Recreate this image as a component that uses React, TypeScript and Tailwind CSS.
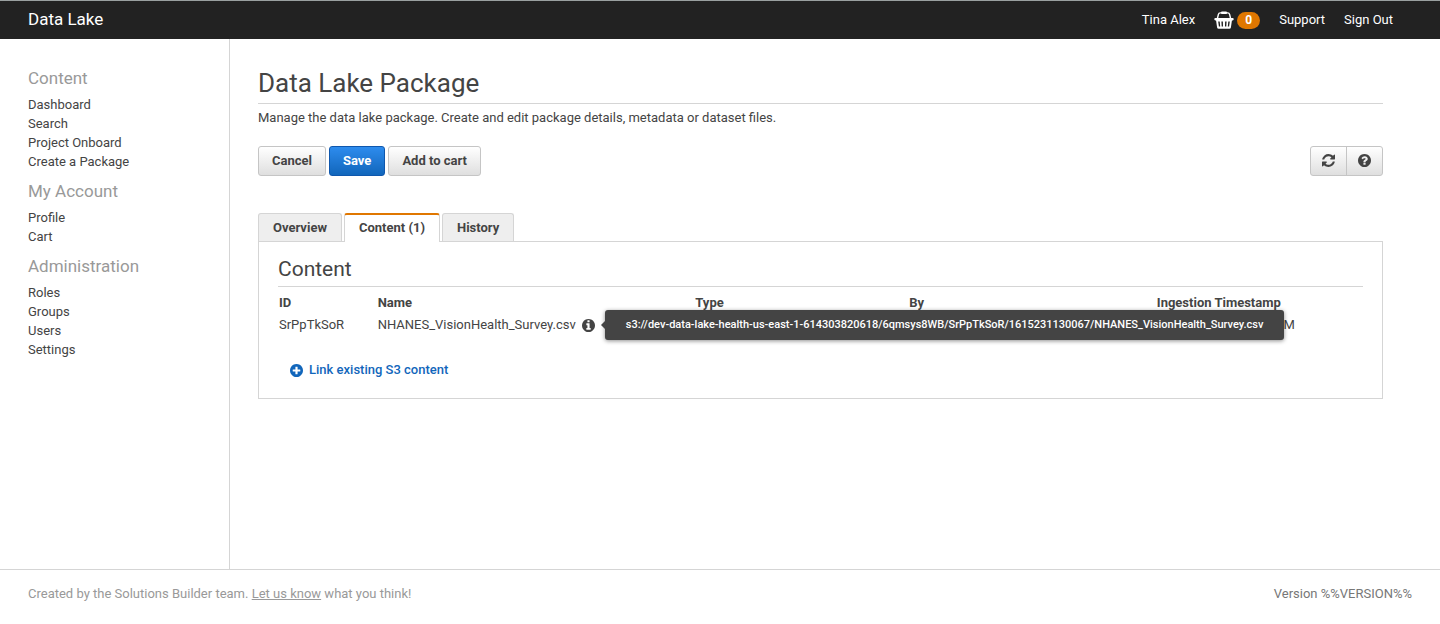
import { useState, type ReactNode } from "react";

const navigation = [
  { title: "Content", links: ["Dashboard", "Search", "Project Onboard", "Create a Package"] },
  { title: "My Account", links: ["Profile", "Cart"] },
  { title: "Administration", links: ["Roles", "Groups", "Users", "Settings"] },
];

const tabs = ["Overview", "Content (1)", "History"];

const files = [
  {
    id: "SrPpTkSoR",
    name: "NHANES_VisionHealth_Survey.csv",
    location:
      "s3://dev-data-lake-health-us-east-1-614303820618/6qmsys8WB/SrPpTkSoR/1615231130067/NHANES_VisionHealth_Survey.csv",
    type: "",
    by: "",
    timestamp: "03/08/2021 7:18:50 PM",
  },
];

const disc =
  "M1664 896q0 209-103 385.5t-279.5 279.5-385.5 103-385.5-103-279.5-279.5-103-385.5 103-385.5 279.5-279.5 385.5-103 385.5 103 279.5 279.5 103 385.5z";

const iconPaths = {
  info:
    "M1152 1376v-160q0-14-9-23t-23-9h-96v-512q0-14-9-23t-23-9h-320q-14 0-23 9t-9 23v160q0 14 9 23t23 9h96v320h-96q-14 0-23 9t-9 23v160q0 14 9 23t23 9h448q14 0 23-9t9-23zM1024 480v-160q0-14-9-23t-23-9h-192q-14 0-23 9t-9 23v160q0 14 9 23t23 9h192q14 0 23-9t9-23z" +
    disc,
  help:
    "M1024 1376v-192q0-14-9-23t-23-9h-192q-14 0-23 9t-9 23v192q0 14 9 23t23 9h192q14 0 23-9t9-23zM1280 704q0-88-55.5-163t-138.5-116-170-41q-243 0-371 213-15 24 8 42l132 100q7 6 19 6 16 0 25-12 53-68 86-92 34-24 86-24 48 0 85.5 26t37.5 59q0 38-20 61t-68 45q-63 28-115.5 86.5t-52.5 125.5v36q0 14 9 23t23 9h192q14 0 23-9t9-23q0-19 21.5-49.5t54.5-49.5q32-18 49-28.5t46-35 44.5-48 28-60.5 12.5-81z" +
    disc,
  plus:
    "M1344 960v-128q0-26-19-45t-45-19h-256v-256q0-26-19-45t-45-19h-128q-26 0-45 19t-19 45v256h-256q-26 0-45 19t-19 45v128q0 26 19 45t45 19h256v256q0 26 19 45t45 19h128q26 0 45-19t19-45v-256h256q26 0 45-19t19-45z" +
    disc,
  refresh:
    "M1639 1056q0 5-1 7-64 268-268 434.5t-478 166.5q-146 0-282.5-55t-243.5-157l-129 129q-19 19-45 19t-45-19-19-45v-448q0-26 19-45t45-19h448q26 0 45 19t19 45-19 45l-137 137q71 66 161 102t187 36q134 0 250-65t186-179q11-17 53-117 8-23 30-23h192q13 0 22.5 9.5t9.5 22.5zM1664 256v448q0 26-19 45t-45 19h-448q-26 0-45-19t-19-45 19-45l138-138q-148-137-349-137-134 0-250 65t-186 179q-11 17-53 117-8 23-30 23h-199q-13 0-22.5-9.5t-9.5-22.5v-7q65-268 270-434.5t480-166.5q146 0 284 55.5t245 156.5l130-129q19-19 45-19t45 19 19 45z",
};

function Icon({ name }: { name: keyof typeof iconPaths }) {
  return (
    <svg viewBox="128 128 1536 1536" className="size-[13px] shrink-0" aria-hidden="true">
      <path fill="currentColor" fillRule="evenodd" d={iconPaths[name]} />
    </svg>
  );
}

function BasketIcon() {
  return (
    <svg viewBox="0 0 20 18" className="h-[18px] w-5" aria-hidden="true">
      <path d="M3.4 7.5 L4.4 3.4 Q4.8 1.9 6.2 1.9 H13.8 Q15.2 1.9 15.6 3.4 L16.6 7.5" fill="none" stroke="#fff" strokeWidth="1.4" />
      <rect x="7" y="0.4" width="6" height="2.5" rx="1" fill="#fff" />
      <rect x="0.3" y="7" width="19.4" height="2.4" rx="1.1" fill="#fff" />
      <path
        fillRule="evenodd"
        fill="#fff"
        d="M2 9 H18 L16.9 16.4 Q16.7 17.8 15.3 17.8 H4.7 Q3.3 17.8 3.1 16.4 Z M4.2 10.6 L4.9 15.6 H6.2 L5.7 10.6 Z M7.4 10.6 L7.7 15.6 H9 L8.9 10.6 Z M11.1 10.6 L11 15.6 H12.3 L12.6 10.6 Z M14.3 10.6 L13.8 15.6 H15.1 L15.8 10.6 Z"
      />
    </svg>
  );
}

function Button({ primary = false, children }: { primary?: boolean; children: ReactNode }) {
  const tone = primary
    ? "border-[#0f57ad] bg-linear-to-b from-[#2d8cee] to-[#1166bb] text-white"
    : "border-[#c5c5c5] bg-linear-to-b from-white to-[#dfdfdf] text-[#444]";
  return (
    <button type="button" className={`h-[30px] rounded-[3px] border px-[13px] font-bold ${tone}`}>
      {children}
    </button>
  );
}

export default function App() {
  const [active, setActive] = useState("Content (1)");

  return (
    <div className="flex min-h-screen flex-col bg-white font-['Roboto',sans-serif] text-[13px] text-[#444]">
      <header className="flex h-[39px] items-center justify-between border-t border-[#9aa0a0] bg-[#222] pr-[47px] pl-7 text-white">
        <a href="#home" className="pb-[2px] text-[17px] leading-5">
          Data Lake
        </a>
        <nav className="flex items-center gap-[19px]">
          <a href="#account">Tina Alex</a>
          <a href="#cart" aria-label="Cart" className="flex items-center gap-[3px]">
            <BasketIcon />
            <span className="h-[17px] w-[23px] rounded-full bg-[#e07700] text-center text-xs leading-[17px] font-bold">0</span>
          </a>
          <a href="#support">Support</a>
          <a href="#signout">Sign Out</a>
        </nav>
      </header>

      <div className="flex flex-1">
        <aside className="w-[230px] shrink-0 border-r border-[#d5d5d5] pt-7 pl-7">
          {navigation.map((group) => (
            <section key={group.title} className="mb-[9px]">
              <h2 className="mb-[5px] text-[17px] leading-[23px] text-[#999]">{group.title}</h2>
              <ul>
                {group.links.map((link) => (
                  <li key={link} className="leading-[19px]">
                    <a href="#nav">{link}</a>
                  </li>
                ))}
              </ul>
            </section>
          ))}
        </aside>

        <main className="min-w-0 flex-1 pt-7 pr-[57px] pl-7">
          <h1 className="border-b border-[#d5d5d5] pb-1 text-[26px] leading-8">Data Lake Package</h1>
          <p className="mt-1 leading-5">
            Manage the data lake package. Create and edit package details, metadata or dataset files.
          </p>

          <div className="mt-[18px] flex items-center justify-between">
            <div className="flex gap-[3px]">
              <Button>Cancel</Button>
              <Button primary>Save</Button>
              <Button>Add to cart</Button>
            </div>
            <div className="flex h-[30px] divide-x divide-[#c5c5c5] rounded-[3px] border border-[#c5c5c5] bg-linear-to-b from-white to-[#dfdfdf]">
              <button type="button" aria-label="Refresh" className="flex w-9 items-center justify-center pb-px">
                <Icon name="refresh" />
              </button>
              <button type="button" aria-label="Help" className="flex w-[35px] items-center justify-center pb-px">
                <Icon name="help" />
              </button>
            </div>
          </div>

          <div role="tablist" className="mt-[37px] flex gap-[2px]">
            {tabs.map((tab) => (
              <button
                key={tab}
                type="button"
                role="tab"
                aria-selected={tab === active}
                onClick={() => setActive(tab)}
                className={
                  tab === active
                    ? "relative -mb-px h-[29px] rounded-t-[3px] border-x border-t-2 border-x-[#d5d5d5] border-t-[#e07700] bg-white px-[14px] pb-[2px] font-bold"
                    : "h-7 rounded-t-[3px] border border-b-0 border-[#d5d5d5] bg-[#eee] px-[14px] font-bold"
                }
              >
                {tab}
              </button>
            ))}
          </div>

          <section className="border border-[#d5d5d5] px-[19px] pt-[13px] pb-[18px]">
            <h2 className="border-b border-[#d5d5d5] pb-[3px] text-[21px] leading-7">Content</h2>
            <table className="mt-1 w-full table-fixed text-left">
              <thead>
                <tr className="h-[23px]">
                  <th className="w-[9%] pl-px">ID</th>
                  <th className="w-[29%] pl-[2px]">Name</th>
                  <th className="w-[20%] pl-[5px]">Type</th>
                  <th className="w-[23%] pl-[2px]">By</th>
                  <th className="w-[19%]">Ingestion Timestamp</th>
                </tr>
              </thead>
              <tbody>
                {files.map((file) => (
                  <tr key={file.id} className="h-[22px]">
                    <td className="pl-px">{file.id}</td>
                    <td className="pl-[2px]">
                      <span className="relative inline-flex items-center gap-[6px]">
                        {file.name}
                        <Icon name="info" />
                        <span
                          role="tooltip"
                          className="absolute top-1/2 left-full z-10 ml-[10px] -translate-y-1/2 rounded-[3px] bg-[#444] px-[21px] py-[6px] text-[11px] leading-[18px] font-medium whitespace-nowrap text-white shadow-[0_1px_4px_rgba(0,0,0,0.45)] before:absolute before:top-1/2 before:-left-1 before:-translate-y-1/2 before:border-y-4 before:border-r-4 before:border-y-transparent before:border-r-[#444]"
                        >
                          {file.location}
                        </span>
                      </span>
                    </td>
                    <td>{file.type}</td>
                    <td>{file.by}</td>
                    <td>{file.timestamp}</td>
                  </tr>
                ))}
              </tbody>
            </table>
            <a href="#link" className="mt-6 ml-3 flex w-fit items-center gap-[6px] leading-5 font-medium text-[#1166bb]">
              <Icon name="plus" />
              Link existing S3 content
            </a>
          </section>
        </main>
      </div>

      <footer className="flex h-[55px] items-start justify-between border-t border-[#d5d5d5] px-7 pt-[14px] leading-5 text-[#999]">
        <p>
          Created by the Solutions Builder team.{" "}
          <a href="#feedback" className="underline">
            Let us know
          </a>{" "}
          what you think!
        </p>
        <p className="text-[#777]">Version %%VERSION%%</p>
      </footer>
    </div>
  );
}
